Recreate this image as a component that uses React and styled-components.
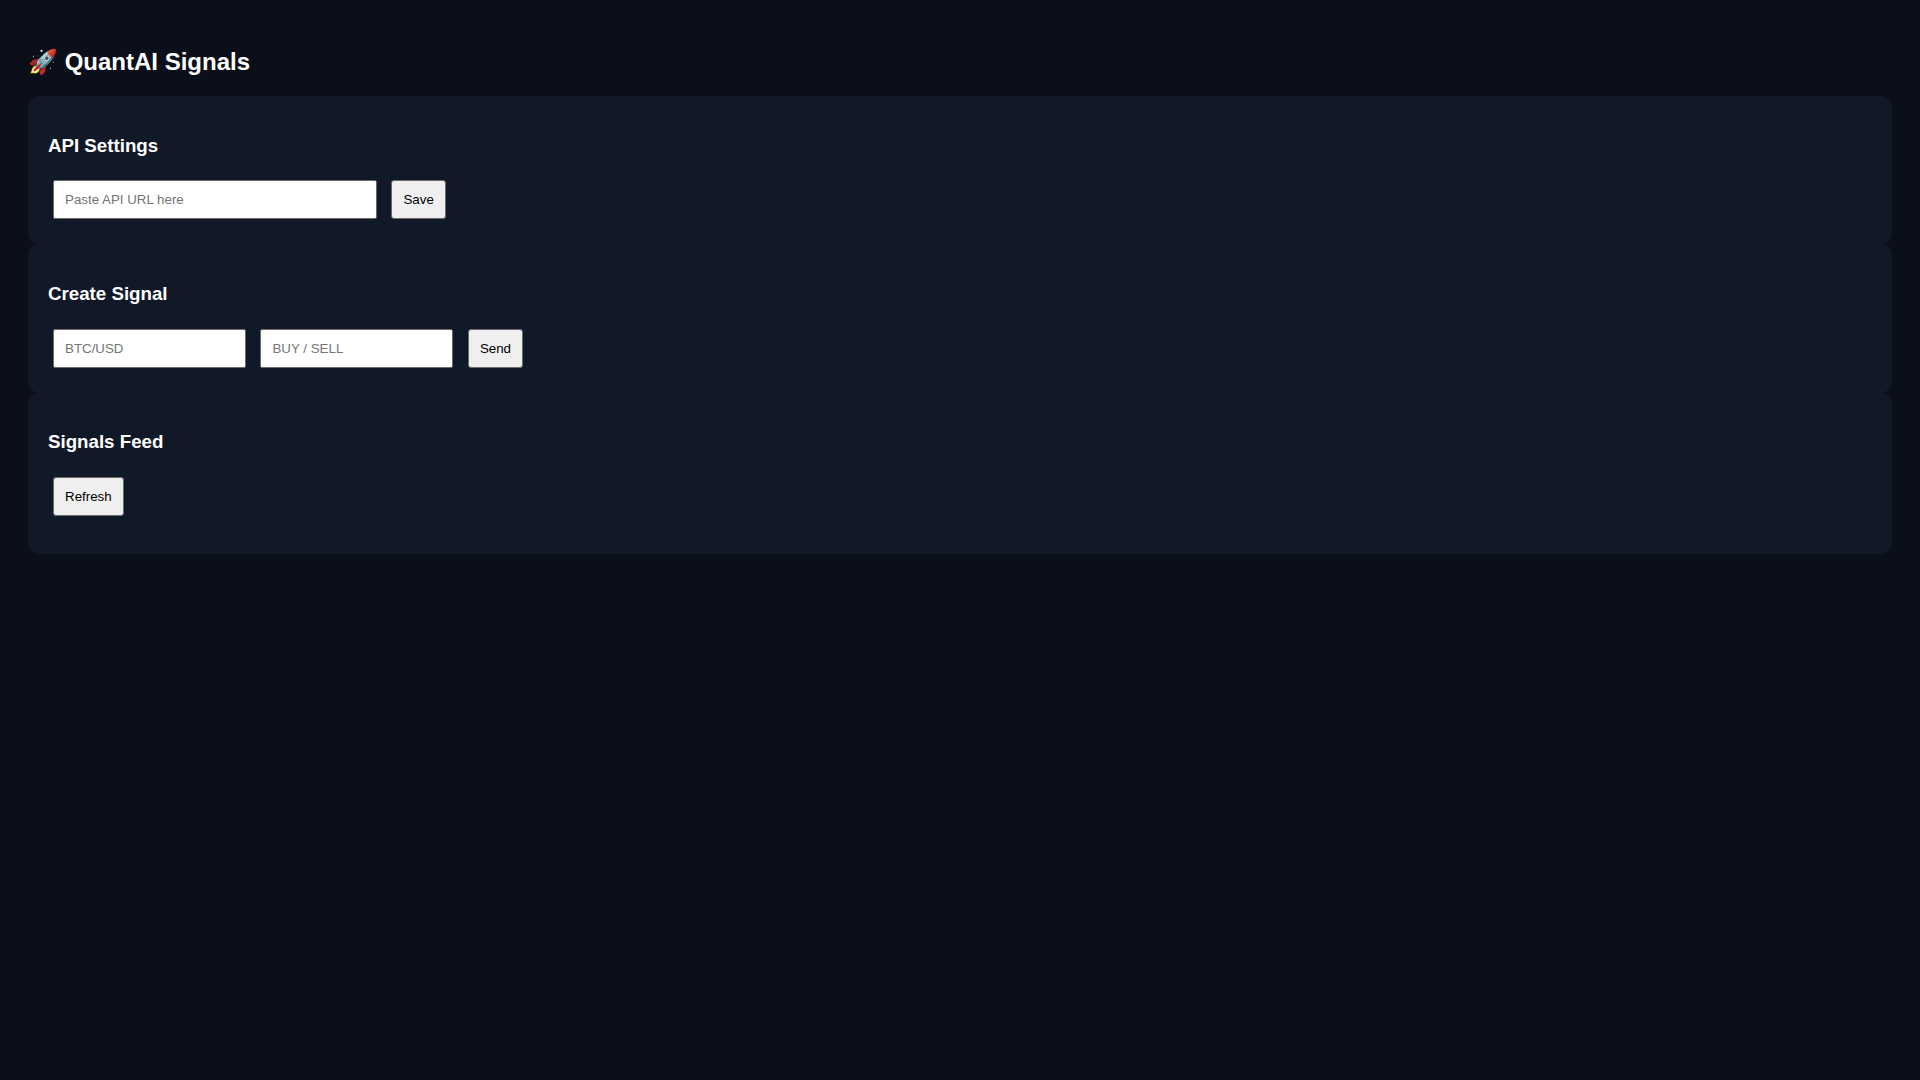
import React from 'react'
import styled, { createGlobalStyle } from 'styled-components'

const GlobalStyle = createGlobalStyle`
  body {
    background: #0b0f19;
    color: #fff;
    font-family: "Liberation Sans", Arial, sans-serif;
    padding: 20px;
  }
`

const Title = styled.h2`
  color: #fff;
`

const Card = styled.section`
  background: #111928;
  padding: 20px;
  border-radius: 12px;
`

const CardTitle = styled.h3`
  color: #fff;
`

const Field = styled.input`
  background: #fff;
  border: 1px solid #6b6b6b;
  border-radius: 2px;
  padding: 11px;
  margin: 5px;
  width: ${(p) => (p.$wide ? '300px' : '169px')};
`

const Action = styled.button`
  background: #efefef;
  border: 1px solid #6b6b6b;
  border-radius: 3px;
  padding: 11px;
  margin: 5px;
`

const Feed = styled.div`
  margin-top: 13px;
`

export default function App() {
  return (
    <>
      <GlobalStyle />
      <Title>🚀 QuantAI Signals</Title>

      <Card>
        <CardTitle>API Settings</CardTitle>
        <Field $wide placeholder="Paste API URL here" />{' '}
        <Action>Save</Action>
      </Card>

      <Card>
        <CardTitle>Create Signal</CardTitle>
        <Field placeholder="BTC/USD" />{' '}
        <Field placeholder="BUY / SELL" />{' '}
        <Action>Send</Action>
      </Card>

      <Card>
        <CardTitle>Signals Feed</CardTitle>
        <Action>Refresh</Action>
        <Feed />
      </Card>
    </>
  )
}
